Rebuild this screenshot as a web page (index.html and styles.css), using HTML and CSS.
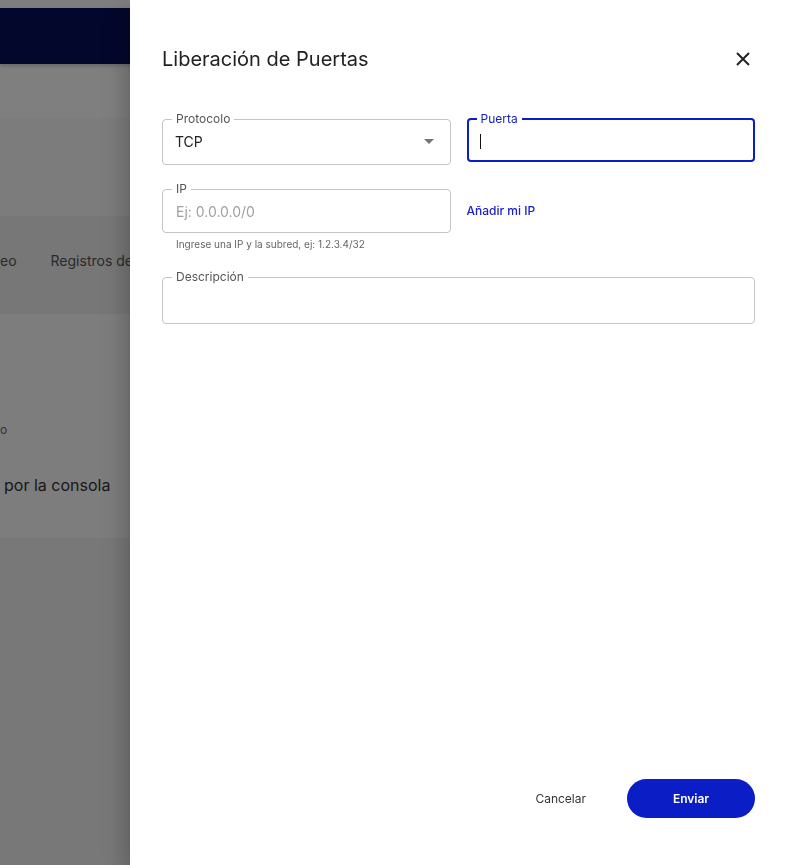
FILE: index.html
```html
<!DOCTYPE html>
<html lang="es">
<head>
  <meta charset="UTF-8">
  <meta name="viewport" content="width=device-width, initial-scale=1.0">
  <link rel="stylesheet" href="styles.css">
  <title>Liberación de Puertas</title>
</head>
<body>
  <div class="page">
    <header class="topbar"></header>
    <div class="spacer"></div>
    <div class="hero"></div>
    <nav class="tabs">
      <span class="tab">eo</span>
      <span class="tab">Registros de</span>
    </nav>
    <div class="content">
      <span class="hint">o</span>
      <span class="card-title">por la consola</span>
    </div>
    <div class="band"></div>
  </div>

  <div class="overlay"></div>

  <aside class="drawer">
    <div class="drawer-head">
      <h2 class="drawer-title">Liberación de Puertas</h2>
      <button class="close" aria-label="Cerrar">
        <svg width="14" height="14" viewBox="0 0 14 14">
          <path d="M1 1 L13 13 M13 1 L1 13" stroke="#222" stroke-width="2" fill="none"/>
        </svg>
      </button>
    </div>

    <form class="form">
      <fieldset class="field field-select">
        <legend>Protocolo</legend>
        <div class="select">
          <span>TCP</span>
          <span class="arrow"></span>
        </div>
      </fieldset>

      <fieldset class="field field-focus">
        <legend>Puerta</legend>
        <div class="focus-row">
          <span class="caret"></span>
          <input class="input" type="text">
        </div>
      </fieldset>

      <div class="ip-group">
        <fieldset class="field field-ip">
          <legend>IP</legend>
          <input class="input" type="text" placeholder="Ej: 0.0.0.0/0">
        </fieldset>
        <div class="helper">Ingrese una IP y la subred, ej: 1.2.3.4/32</div>
      </div>

      <a class="add-ip" href="#">Añadir mi IP</a>

      <fieldset class="field field-desc">
        <legend>Descripción</legend>
        <input class="input" type="text">
      </fieldset>
    </form>

    <div class="actions">
      <button class="btn-cancel" type="button">Cancelar</button>
      <button class="btn-send" type="button">Enviar</button>
    </div>
  </aside>
</body>
</html>
```

FILE: styles.css
```css
body {
  margin: 0;
  font-family: "Inter", "Roboto", sans-serif;
  background-color: #fff;
  height: 865px;
  overflow: hidden;
}

.page {
  padding-top: 8px;
}

.topbar {
  height: 56px;
  background-color: #070e58;
  box-shadow: 0 2px 4px rgba(0, 0, 0, 0.2);
}

.spacer {
  height: 54px;
}

.hero {
  height: 98px;
  background-color: #f8f8f8;
}

.tabs {
  height: 62px;
  padding-top: 36px;
  background-color: #eeeeee;
  display: flex;
  gap: 34px;
  font-size: 14px;
  color: #555;
}

.content {
  height: 224px;
  background-color: #fafafa;
  display: flex;
  flex-direction: column;
  align-items: flex-start;
}

.hint {
  margin-top: 108px;
  font-size: 12px;
  color: #666;
}

.card-title {
  margin-top: 38px;
  margin-left: 4px;
  font-size: 16px;
  color: #333;
}

.band {
  height: 330px;
  background-color: #f0f0f0;
}

.overlay {
  position: fixed;
  inset: 0;
  background-color: rgba(0, 0, 0, 0.5);
}

.drawer {
  position: fixed;
  top: 0;
  right: 0;
  bottom: 0;
  width: 657px;
  box-sizing: border-box;
  padding: 40px 32px 47px;
  background-color: #fff;
  display: flex;
  flex-direction: column;
  box-shadow: 0 8px 10px -5px rgba(0, 0, 0, 0.2), 0 16px 24px 2px rgba(0, 0, 0, 0.14), 0 6px 30px 5px rgba(0, 0, 0, 0.12);
}

.drawer-head {
  height: 38px;
  display: flex;
  align-items: center;
  justify-content: space-between;
}

.drawer-title {
  margin: 0;
  font-size: 20px;
  font-weight: 400;
  color: #222;
}

.close {
  background: none;
  border: none;
  padding: 0;
  margin-right: 5px;
  display: flex;
  cursor: pointer;
}

.form {
  flex: 1;
  margin-top: 34px;
  display: grid;
  grid-template-columns: 1fr 1fr;
  column-gap: 16px;
  row-gap: 17px;
  align-items: start;
  align-content: start;
}

.field {
  margin: 0;
  padding: 0 9px;
  border: 1px solid #c4c4c4;
  border-radius: 4px;
  min-width: 0;
}

.field legend {
  padding: 0 4px;
  font-size: 12px;
  line-height: 14px;
  color: #555;
}

.input {
  display: block;
  width: 100%;
  box-sizing: border-box;
  height: 30px;
  border: none;
  outline: none;
  padding: 0 4px;
  font-family: inherit;
  font-size: 14px;
  color: #222;
  background: transparent;
}

.input::placeholder {
  color: #a0a0a0;
}

.field-select {
  padding-bottom: 8px;
}

.select {
  height: 30px;
  padding: 0 3px;
  display: flex;
  align-items: center;
  justify-content: space-between;
  font-size: 14px;
  color: #222;
}

.arrow {
  width: 0;
  height: 0;
  margin-right: 4px;
  border-left: 5px solid transparent;
  border-right: 5px solid transparent;
  border-top: 5px solid #757575;
}

.field-focus {
  border: 2px solid #0b1ec6;
  padding: 0 8px 4px;
}

.field-focus legend {
  color: #0b1ec6;
}

.focus-row {
  display: flex;
  align-items: center;
  height: 30px;
}

.caret {
  width: 1px;
  height: 15px;
  margin-left: 3px;
  background-color: #111;
  flex: none;
}

.field-ip {
  padding-bottom: 6px;
}

.helper {
  margin-top: 5px;
  padding-left: 14px;
  font-size: 10px;
  line-height: 12px;
  color: #666;
}

.add-ip {
  margin-top: 22px;
  font-size: 12px;
  line-height: 14px;
  font-weight: 500;
  color: #1b21c4;
  text-decoration: none;
}

.field-desc {
  grid-column: 1 / 3;
  margin-top: 3px;
  padding-bottom: 8px;
}

.field-desc .input {
  height: 31px;
}

.actions {
  display: flex;
  justify-content: flex-end;
  align-items: center;
  gap: 25px;
}

.btn-cancel {
  height: 39px;
  padding: 0 16px;
  background: none;
  border: none;
  font-family: inherit;
  font-size: 12px;
  color: #333;
  cursor: pointer;
}

.btn-send {
  width: 128px;
  height: 39px;
  border: none;
  border-radius: 20px;
  background-color: #0b1ec6;
  color: #fff;
  font-family: inherit;
  font-size: 12px;
  font-weight: 600;
  cursor: pointer;
}
```
